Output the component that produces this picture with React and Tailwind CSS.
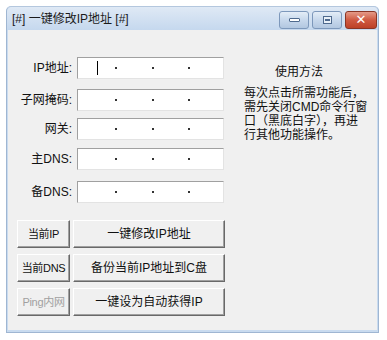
const font = { fontFamily: '"Liberation Sans", "Noto Sans CJK SC", sans-serif' };

const IpBox = ({ cursor }) => (
  <div className="relative h-[22px] w-[147px] bg-white border border-t-[#a0a0a0] border-l-[#a0a0a0] border-r-[#e3e3e3] border-b-[#e3e3e3]">
    {cursor && <div className="absolute left-[19px] top-[3px] w-px h-[14px] bg-black" />}
    <span className="absolute left-[37px] top-[9px] w-[2px] h-[2px] bg-[#333]" />
    <span className="absolute left-[74px] top-[9px] w-[2px] h-[2px] bg-[#333]" />
    <span className="absolute left-[110px] top-[9px] w-[2px] h-[2px] bg-[#333]" />
  </div>
);

const Row = ({ label, cursor, mt }) => (
  <div className={`flex items-center gap-[5px] ${mt}`}>
    <div className="w-[55px] text-right text-[12px] text-[#111] whitespace-nowrap">{label}</div>
    <IpBox cursor={cursor} />
  </div>
);

const Btn = ({ children, w, disabled, small }) => (
  <button
    className={`h-[28px] ${w} bg-[#f0f0f0] whitespace-nowrap border border-t-white border-l-white border-r-[#696969] border-b-[#696969] shadow-[inset_-1px_-1px_0_#a0a0a0] ${small ? 'text-[11px] tracking-[-0.3px]' : 'text-[12px]'} ${disabled ? 'text-[#a0a0a0]' : 'text-[#111]'}`}
  >
    {children}
  </button>
);

const CapBtn = ({ children, close }) => (
  <div
    className={`h-[18px] flex items-center justify-center rounded-[3px] border ${
      close
        ? 'w-[32px] border-[#8a3525] bg-gradient-to-b from-[#e49a88] via-[#cf5a42] to-[#bd4127]'
        : 'w-[30px] border-[#7d98bb] bg-gradient-to-b from-[#e4edf7] via-[#c7d8ec] to-[#b2c7e0]'
    }`}
  >
    {children}
  </div>
);

export default function App() {
  return (
    <div className="w-[387px] h-[340px] bg-white pt-[6px] pl-[6px]" style={font}>
      <div className="w-[373px] h-[327px] flex flex-col bg-[#c9dbef] rounded-t-[5px] border border-[#9fb6d2] border-t-[#b4c7de]">
        <div className="h-[23px] flex items-center justify-between pl-[5px] pr-[1px] bg-gradient-to-b from-[#dfe9f5] to-[#c5d8ee] rounded-t-[5px]">
          <span className="text-[12px] text-[#1a1a1a]">[#] 一键修改IP地址 [#]</span>
          <div className="flex items-center gap-[3px] mt-[2px]">
            <CapBtn>
              <div className="w-[11px] h-[4px] bg-white border border-[#4f6a8e] rounded-[1px]" />
            </CapBtn>
            <CapBtn>
              <div className="w-[9px] h-[8px] border-[1.5px] border-[#4f6a8e] flex items-center justify-center bg-[#e8f0f8]">
                <div className="w-[5px] h-[2px] bg-[#4f6a8e]" />
              </div>
            </CapBtn>
            <CapBtn close>
              <span className="text-white text-[13px] font-bold leading-none" style={{ fontFamily: '"DejaVu Sans", sans-serif' }}>✕</span>
            </CapBtn>
          </div>
        </div>
        <div className="flex-1 mx-[1px] mb-[2px] bg-[#f0f0f0] flex pl-[9px] pt-[27px]">
          <div className="flex flex-col">
            <Row label="IP地址:" cursor />
            <Row label="子网掩码:" mt="mt-[10px]" />
            <Row label="网关:" mt="mt-[7px]" />
            <Row label="主DNS:" mt="mt-[8px]" />
            <Row label="备DNS:" mt="mt-[11px]" />
            <div className="flex flex-col gap-[6px] mt-[17px]">
              <div className="flex gap-[3px]">
                <Btn w="w-[53px]" small>当前IP</Btn>
                <Btn w="w-[152px]">一键修改IP地址</Btn>
              </div>
              <div className="flex gap-[3px]">
                <Btn w="w-[53px]" small>当前DNS</Btn>
                <Btn w="w-[152px]">备份当前IP地址到C盘</Btn>
              </div>
              <div className="flex gap-[3px]">
                <Btn w="w-[53px]" small disabled>Ping内网</Btn>
                <Btn w="w-[152px]">一键设为自动获得IP</Btn>
              </div>
            </div>
          </div>
          <div className="ml-[19px] w-[120px] text-[12px] text-[#111]">
            <div className="mt-[8px] leading-[14px] pl-[31px]">使用方法</div>
            <div className="mt-[7px] leading-[14px] whitespace-nowrap">
              <div>每次点击所需功能后，</div>
              <div>需先关闭CMD命令行窗</div>
              <div>口（黑底白字），再进</div>
              <div>行其他功能操作。</div>
            </div>
          </div>
        </div>
      </div>
    </div>
  );
}
